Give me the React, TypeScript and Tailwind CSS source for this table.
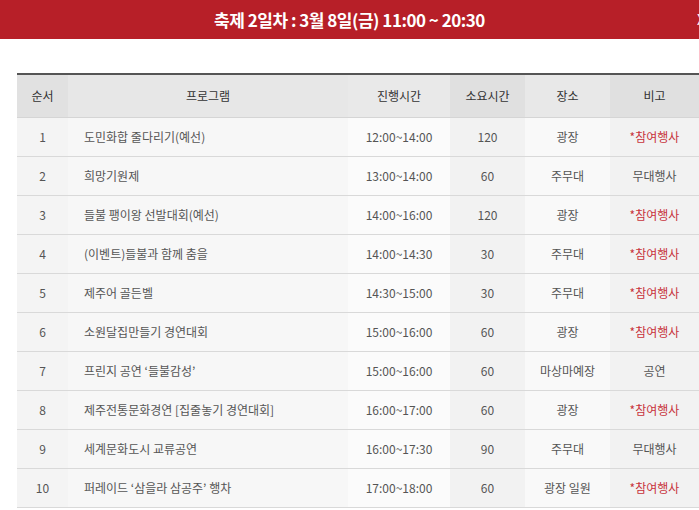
const rows = [
  ["1", "도민화합 줄다리기(예선)", "12:00~14:00", "120", "광장", "*참여행사"],
  ["2", "희망기원제", "13:00~14:00", "60", "주무대", "무대행사"],
  ["3", "들불 팽이왕 선발대회(예선)", "14:00~16:00", "120", "광장", "*참여행사"],
  ["4", "(이벤트)들불과 함께 춤을", "14:00~14:30", "30", "주무대", "*참여행사"],
  ["5", "제주어 골든벨", "14:30~15:00", "30", "주무대", "*참여행사"],
  ["6", "소원달집만들기 경연대회", "15:00~16:00", "60", "광장", "*참여행사"],
  ["7", "프린지 공연 ‘들불감성’", "15:00~16:00", "60", "마상마예장", "공연"],
  ["8", "제주전통문화경연 [집줄놓기 경연대회]", "16:00~17:00", "60", "광장", "*참여행사"],
  ["9", "세계문화도시 교류공연", "16:00~17:30", "90", "주무대", "무대행사"],
  ["10", "퍼레이드 ‘삼을라 삼공주’ 행차", "17:00~18:00", "60", "광장 일원", "*참여행사"],
];

const headBg = ["bg-[#e1e1e1]", "bg-[#e7e7e7]", "bg-[#e9e9e9]", "bg-[#e0e0e0]", "bg-[#e8e8e8]", "bg-[#e0e0e0]"];
const bodyBg = ["bg-[#f4f4f4]", "bg-[#f7f7f7]", "bg-[#fbfbfb]", "bg-[#f2f2f2]", "bg-[#f9f9f9]", "bg-[#f2f2f2]"];
const widths = ["w-[51px]", "w-[280px]", "w-[102px]", "w-[75px]", "w-[85px]", "w-[89px]"];
const heads = ["순서", "프로그램", "진행시간", "소요시간", "장소", "비고"];

export default function App() {
  return (
    <div className="w-[699px] h-[510px] overflow-hidden bg-white font-['Noto_Sans_CJK_KR','Noto_Sans',sans-serif]">
      <div className="relative h-[39px] bg-[#b71f28] flex items-center justify-center">
        <h2 className="text-white text-[17px] font-bold tracking-[-0.5px] leading-none">
          축제 2일차 : 3월 8일(금) 11:00 ~ 20:30
        </h2>
        <span className="absolute right-[-6px] top-[12px] text-white text-[14px] leading-none">X</span>
      </div>
      <div className="pt-[34px] pl-[17px]">
        <table className="w-[682px] table-fixed border-collapse border-t-2 border-[#555] text-[12px] text-[#555]">
          <thead>
            <tr className="h-[43px] border-b border-[#d5d5d5]">
              {heads.map((h, i) => (
                <th key={h} className={`${widths[i]} ${headBg[i]} font-normal text-[#333] text-center`}>
                  {h}
                </th>
              ))}
            </tr>
          </thead>
          <tbody>
            {rows.map((r) => (
              <tr key={r[0]} className="h-[39px] border-b border-[#d9d9d9]">
                {r.map((c, i) => (
                  <td
                    key={i}
                    className={`${bodyBg[i]} ${i === 1 ? "text-left pl-[16px]" : "text-center"} ${
                      c.startsWith("*") ? "text-[#c8333b]" : ""
                    }`}
                  >
                    {c}
                  </td>
                ))}
              </tr>
            ))}
          </tbody>
        </table>
      </div>
    </div>
  );
}
